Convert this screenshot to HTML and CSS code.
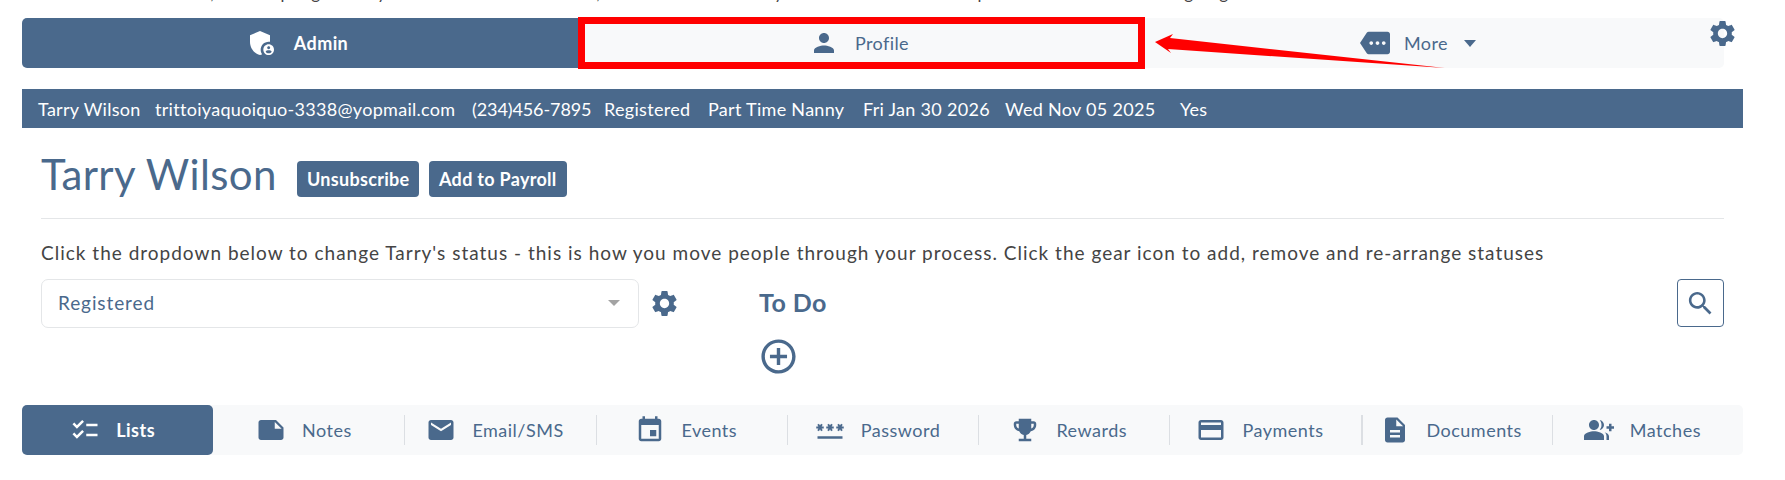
FILE: index.html
```html
<!DOCTYPE html>
<html lang="en">
<head>
    <meta charset="UTF-8">
    <meta name="viewport" content="width=device-width, initial-scale=1.0">
    <title>Tarry Wilson</title>
    <link rel="stylesheet" href="styles.css">
</head>
<body>
    <div class="cutLine">
        <div class="cutLineInner">
            <span>Use the tabs below to add,</span>
            <span>the setup</span>
            <span>log</span>
            <span>key</span>
            <span>and notes for the member,</span>
            <span>then key</span>
            <span>the details on this top</span>
            <span>and then the main log</span>
            <span>tag</span>
            <span class="cutLineEnd">on the section and its data table</span>
        </div>
    </div>

    <nav class="topNav">
        <a class="topTab topTabActive topTabAdmin">
            <svg class="icon iconAdmin" viewBox="0 0 24 24"><path d="M17 11c.34 0 .67.04 1 .09V6.27L10.5 3 3 6.27v4.91c0 4.54 3.2 8.79 7.5 9.82.55-.13 1.08-.32 1.6-.55-.69-.98-1.1-2.17-1.1-3.45 0-3.31 2.69-6 6-6z"/><path d="M17 13c-2.21 0-4 1.79-4 4s1.79 4 4 4 4-1.79 4-4-1.79-4-4-4zm0 1.38c.62 0 1.12.51 1.12 1.12s-.51 1.12-1.12 1.12-1.12-.51-1.12-1.12.5-1.12 1.12-1.12zm0 5.37c-.93 0-1.74-.46-2.24-1.17.05-.72 1.51-1.08 2.24-1.08s2.19.36 2.24 1.08c-.5.71-1.31 1.17-2.24 1.17z"/></svg>
            <span>Admin</span>
        </a>
        <a class="topTab topTabProfile">
            <svg class="icon iconTop" viewBox="0 0 24 24"><path d="M12 12c2.21 0 4-1.79 4-4s-1.79-4-4-4-4 1.79-4 4 1.79 4 4 4zm0 2c-2.67 0-8 1.34-8 4v2h16v-2c0-2.66-5.33-4-8-4z"/></svg>
            <span>Profile</span>
        </a>
        <a class="topTab topTabMore">
            <svg class="icon iconTop" viewBox="0 0 24 24"><path d="M22 3H7c-.69 0-1.23.35-1.59.88L0 12l5.41 8.11c.36.53.9.89 1.59.89h15c1.1 0 2-.9 2-2V5c0-1.1-.9-2-2-2zM9 13.5c-.83 0-1.5-.67-1.5-1.5s.67-1.5 1.5-1.5 1.5.67 1.5 1.5-.67 1.5-1.5 1.5zm5 0c-.83 0-1.5-.67-1.5-1.5s.67-1.5 1.5-1.5 1.5.67 1.5 1.5-.67 1.5-1.5 1.5zm5 0c-.83 0-1.5-.67-1.5-1.5s.67-1.5 1.5-1.5 1.5.67 1.5 1.5-.67 1.5-1.5 1.5z"/></svg>
            <span>More</span>
            <span class="caret"></span>
        </a>
        <svg class="icon navGear" viewBox="0 0 24 24"><path d="M19.14 12.94c.04-.3.06-.61.06-.94 0-.32-.02-.64-.07-.94l2.03-1.58c.18-.14.23-.41.12-.61l-1.92-3.32c-.12-.22-.37-.29-.59-.22l-2.39.96c-.5-.38-1.03-.7-1.62-.94l-.36-2.54c-.04-.24-.24-.41-.48-.41h-3.84c-.24 0-.43.17-.47.41l-.36 2.54c-.59.24-1.13.57-1.62.94l-2.39-.96c-.22-.08-.47 0-.59.22L2.74 8.87c-.12.21-.08.47.12.61l2.03 1.58c-.05.3-.09.63-.09.94s.02.64.07.94l-2.03 1.58c-.18.14-.23.41-.12.61l1.92 3.32c.12.22.37.29.59.22l2.39-.96c.5.38 1.03.7 1.62.94l.36 2.54c.05.24.24.41.48.41h3.84c.24 0 .44-.17.47-.41l.36-2.54c.59-.24 1.13-.56 1.62-.94l2.39.96c.22.08.47 0 .59-.22l1.92-3.32c.12-.22.07-.47-.12-.61l-2.01-1.58zM12 15.6c-1.98 0-3.6-1.62-3.6-3.6s1.62-3.6 3.6-3.6 3.6 1.62 3.6 3.6-1.62 3.6-3.6 3.6z"/></svg>
    </nav>

    <!-- red annotation drawn over the page -->
    <div class="markBox"></div>
    <svg class="markArrow" viewBox="0 0 300 52"><polygon points="0,25 18,17 15,21 290,51 13,32 16,36" /></svg>

    <div class="infoBar">
        <span>Tarry Wilson</span>
        <span>trittoiyaquoiquo-3338@yopmail.com</span>
        <span class="infoPhone">(234)456-7895</span>
        <span>Registered</span>
        <span>Part Time Nanny</span>
        <span>Fri Jan 30 2026</span>
        <span>Wed Nov 05 2025</span>
        <span>Yes</span>
    </div>

    <main class="content">
        <div class="titleRow">
            <h1 class="title">Tarry Wilson</h1>
            <button class="btn btnFirst">Unsubscribe</button>
            <button class="btn">Add to Payroll</button>
        </div>
        <hr class="line">
        <p class="helpText">Click the dropdown below to change Tarry's status - this is how you move people through your process. Click the gear icon to add, remove and re-arrange statuses</p>
        <div class="statusRow">
            <div class="select">
                <span>Registered</span>
                <span class="selectCaret"></span>
            </div>
            <svg class="icon statusGear" viewBox="0 0 24 24"><path d="M19.14 12.94c.04-.3.06-.61.06-.94 0-.32-.02-.64-.07-.94l2.03-1.58c.18-.14.23-.41.12-.61l-1.92-3.32c-.12-.22-.37-.29-.59-.22l-2.39.96c-.5-.38-1.03-.7-1.62-.94l-.36-2.54c-.04-.24-.24-.41-.48-.41h-3.84c-.24 0-.43.17-.47.41l-.36 2.54c-.59.24-1.13.57-1.62.94l-2.39-.96c-.22-.08-.47 0-.59.22L2.74 8.87c-.12.21-.08.47.12.61l2.03 1.58c-.05.3-.09.63-.09.94s.02.64.07.94l-2.03 1.58c-.18.14-.23.41-.12.61l1.92 3.32c.12.22.37.29.59.22l2.39-.96c.5.38 1.03.7 1.62.94l.36 2.54c.05.24.24.41.48.41h3.84c.24 0 .44-.17.47-.41l.36-2.54c.59-.24 1.13-.56 1.62-.94l2.39.96c.22.08.47 0 .59-.22l1.92-3.32c.12-.22.07-.47-.12-.61l-2.01-1.58zM12 15.6c-1.98 0-3.6-1.62-3.6-3.6s1.62-3.6 3.6-3.6 3.6 1.62 3.6 3.6-1.62 3.6-3.6 3.6z"/></svg>
            <div class="todo">
                <h2 class="todoTitle">To Do</h2>
                <svg class="icon todoAdd" viewBox="0 0 24 24"><path d="M13 7h-2v4H7v2h4v4h2v-4h4v-2h-4V7zm-1-5C6.48 2 2 6.48 2 12s4.48 10 10 10 10-4.48 10-10S17.52 2 12 2zm0 18c-4.41 0-8-3.59-8-8s3.59-8 8-8 8 3.59 8 8-3.59 8-8 8z"/></svg>
            </div>
            <button class="searchBtn">
                <svg class="icon iconSearch" viewBox="0 0 24 24"><path d="M15.5 14h-.79l-.28-.27C15.41 12.59 16 11.11 16 9.5 16 5.91 13.09 3 9.5 3S3 5.91 3 9.5 5.91 16 9.5 16c1.61 0 3.09-.59 4.23-1.57l.27.28v.79l5 4.99L20.49 19l-4.99-5zm-6 0C7.01 14 5 11.99 5 9.5S7.01 5 9.5 5 14 7.01 14 9.5 11.99 14 9.5 14z"/></svg>
            </button>
        </div>
    </main>

    <div class="tabs">
        <a class="tab tabActive">
            <svg class="icon" viewBox="0 0 24 24"><path d="M22 7h-9v2h9V7zm0 8h-9v2h9v-2zM5.54 11 2 7.46l1.41-1.41 2.12 2.12 4.24-4.24 1.41 1.41L5.54 11zm0 8L2 15.46l1.41-1.41 2.12 2.12 4.24-4.24 1.41 1.41L5.54 19z"/></svg>
            <span>Lists</span>
        </a>
        <a class="tab">
            <svg class="icon" viewBox="0 0 24 24"><path d="M22 10l-6-6H4c-1.1 0-2 .9-2 2v12.01c0 1.1.9 1.99 2 1.99l16-.01c1.1 0 2-.89 2-1.99v-8zm-7-4.5l5.5 5.5H15V5.5z"/></svg>
            <span>Notes</span>
        </a>
        <a class="tab">
            <svg class="icon" viewBox="0 0 24 24"><path d="M20 4H4c-1.1 0-1.99.9-1.99 2L2 18c0 1.1.9 2 2 2h16c1.1 0 2-.9 2-2V6c0-1.1-.9-2-2-2zm0 4l-8 5-8-5V6l8 5 8-5v2z"/></svg>
            <span>Email/SMS</span>
        </a>
        <a class="tab">
            <svg class="icon" viewBox="0 0 24 24"><path d="M17 12h-5v5h5v-5zM16 1v2H8V1H6v2H5c-1.11 0-1.99.9-1.99 2L3 19c0 1.1.89 2 2 2h14c1.1 0 2-.9 2-2V5c0-1.1-.9-2-2-2h-1V1h-2zm3 18H5V8h14v11z"/></svg>
            <span>Events</span>
        </a>
        <a class="tab">
            <svg class="icon" viewBox="0 0 24 24"><path d="M2 17h20v2H2v-2zm1.15-4.05L4 11.47l.85 1.48 1.3-.75-.85-1.48H7v-1.5H5.3l.85-1.47L4.85 7 4 8.47 3.15 7l-1.3.75.85 1.47H1v1.5h1.7l-.85 1.48 1.3.75zm6.7-.75 1.3.75.85-1.48.85 1.48 1.3-.75-.85-1.48H15v-1.5h-1.7l.85-1.47-1.3-.75L12 8.47 11.15 7l-1.3.75.85 1.47H9v1.5h1.7l-.85 1.48zM23 9.22h-1.7l.85-1.47-1.3-.75L20 8.47 19.15 7l-1.3.75.85 1.47H17v1.5h1.7l-.85 1.48 1.3.75.85-1.48.85 1.48 1.3-.75-.85-1.48H23v-1.5z"/></svg>
            <span>Password</span>
        </a>
        <a class="tab">
            <svg class="icon" viewBox="0 0 24 24"><path d="M19 5h-2V3H7v2H5c-1.1 0-2 .9-2 2v1c0 2.55 1.92 4.63 4.39 4.94.63 1.5 1.98 2.63 3.61 2.96V19H7v2h10v-2h-4v-3.1c1.63-.33 2.98-1.46 3.61-2.96C19.08 12.63 21 10.55 21 8V7c0-1.1-.9-2-2-2zM5 8V7h2v3.82C5.84 10.4 5 9.3 5 8zm14 0c0 1.3-.84 2.4-2 2.82V7h2v1z"/></svg>
            <span>Rewards</span>
        </a>
        <a class="tab">
            <svg class="icon" viewBox="0 0 24 24"><path d="M20 4H4c-1.11 0-1.99.89-1.99 2L2 18c0 1.11.89 2 2 2h16c1.11 0 2-.89 2-2V6c0-1.11-.89-2-2-2zm0 14H4v-6h16v6zm0-10H4V6h16v2z"/></svg>
            <span>Payments</span>
        </a>
        <a class="tab">
            <svg class="icon" viewBox="0 0 24 24"><path d="M14 2H6c-1.1 0-1.99.9-1.99 2L4 20c0 1.1.89 2 1.99 2H18c1.1 0 2-.9 2-2V8l-6-6zm2 16H8v-2h8v2zm0-4H8v-2h8v2zm-3-5V3.5L18.5 9H13z"/></svg>
            <span>Documents</span>
        </a>
        <a class="tab">
            <svg class="icon" viewBox="0 0 24 24"><path d="M22 9V7h-2v2h-2v2h2v2h2v-2h2V9h-2zM8 12c2.21 0 4-1.79 4-4s-1.79-4-4-4-4 1.79-4 4 1.79 4 4 4zm0 1c-2.67 0-8 1.34-8 4v3h16v-3c0-2.66-5.33-4-8-4zm4.51-8.95C13.43 5.11 14 6.49 14 8s-.57 2.89-1.49 3.95C14.47 11.7 16 10.04 16 8s-1.53-3.7-3.49-3.95zM16.53 13.83C17.42 14.66 18 15.7 18 17v3h2v-3c0-1.45-1.59-2.51-3.47-3.17z"/></svg>
            <span>Matches</span>
        </a>
    </div>
</body>
</html>
```

FILE: styles.css
```css
* {
  box-sizing: border-box;
}

html, body {
  margin: 0;
  padding: 0;
  background-color: #fff;
  height: 480px;
  overflow: hidden;
}

body {
  font-family: "Lato", "Open Sans", sans-serif;
  font-size: 18px;
  color: #333;
  position: relative;
}

.icon {
  fill: #4a698c;
  display: block;
  flex: none;
  width: 30px;
  height: 30px;
}

/* line of text cut off by the top of the screenshot */
.cutLine {
  height: 5px;
  overflow: hidden;
}

.cutLineInner {
  display: grid;
  grid-template-columns: 214px 76px 30px 66px 214px 183px 204px 206px 35px 1fr;
  margin-top: -18px;
  font-size: 17px;
  line-height: 22px;
  color: #444;
  white-space: nowrap;
}

.cutLineInner span {
  display: flex;
  justify-content: flex-end;
  overflow: hidden;
}

.cutLineInner .cutLineEnd {
  justify-content: flex-start;
}

.topNav {
  display: grid;
  grid-template-columns: 556px 566px 1fr;
  margin: 13px 61px 0 22px;
  height: 50px;
  background-color: #f8f9fa;
  border-radius: 5px;
  position: relative;
}

.topTab {
  display: flex;
  align-items: center;
  justify-content: center;
  gap: 16px;
  color: #4a698c;
  letter-spacing: 0.4px;
}

.topTabActive {
  background-color: #4a698c;
  color: #fff;
  font-weight: 700;
  border-radius: 5px 0 0 5px;
  padding-right: 6px;
}

.topTabActive .icon {
  fill: #fff;
}

.topTabProfile {
  padding-right: 4px;
}

.topTabMore {
  gap: 14px;
  padding-right: 32px;
}

.iconAdmin {
  width: 32px;
  height: 32px;
}

.iconTop {
  width: 30px;
  height: 30px;
}

.caret {
  width: 0;
  height: 0;
  border-left: 6.5px solid transparent;
  border-right: 6.5px solid transparent;
  border-top: 7px solid #4a698c;
  margin-left: 2px;
}

.navGear {
  position: absolute;
  right: -14px;
  top: 0;
  width: 31px;
  height: 31px;
}

.markBox {
  position: absolute;
  left: 578px;
  top: 17px;
  width: 567px;
  height: 52px;
  border: 7px solid #f00;
}

.markArrow {
  position: absolute;
  left: 1155px;
  top: 17px;
  width: 300px;
  height: 52px;
  overflow: visible;
  fill: #f00;
}

.infoBar {
  display: grid;
  grid-template-columns: 117px 317px 132px 104px 155px 142px 175px 1fr;
  align-items: center;
  margin: 21px 42px 0 22px;
  padding-left: 16px;
  height: 39px;
  background-color: #4a698c;
  color: #fff;
  font-size: 18px;
  letter-spacing: 0.3px;
  white-space: nowrap;
}

.infoBar .infoPhone {
  letter-spacing: -0.1px;
}

.content {
  padding: 0 61px 0 41px;
}

.titleRow {
  display: flex;
  align-items: flex-start;
  margin-top: 33px;
  height: 36px;
}

.title {
  margin: 0 21px 0 0;
  width: 235px;
  font-size: 42px;
  font-weight: 400;
  line-height: 26px;
  color: #4a698c;
  letter-spacing: 0.4px;
  white-space: nowrap;
}

.btn {
  height: 36px;
  border: none;
  border-radius: 4px;
  padding: 0 10px;
  background-color: #4a698c;
  color: #fff;
  font-family: inherit;
  font-size: 18px;
  font-weight: 700;
  letter-spacing: 0.3px;
  white-space: nowrap;
}

.btnFirst {
  width: 122px;
  margin-right: 10px;
}

.line {
  margin: 21px 0 0;
  border: none;
  border-top: 1px solid #e4e6e8;
}

.helpText {
  margin: 22px 0 0;
  height: 38px;
  font-size: 19px;
  line-height: 24px;
  color: #444;
  letter-spacing: 1px;
  white-space: nowrap;
}

.statusRow {
  display: flex;
  align-items: flex-start;
  height: 95px;
}

.select {
  display: flex;
  align-items: center;
  justify-content: space-between;
  width: 598px;
  height: 49px;
  padding: 0 18px 2px 16px;
  border: 1px solid #e4e6e8;
  border-radius: 7px;
  font-size: 19px;
  color: #4a698c;
  letter-spacing: 0.9px;
}

.selectCaret {
  width: 0;
  height: 0;
  border-left: 6px solid transparent;
  border-right: 6px solid transparent;
  border-top: 6px solid #a3a3a3;
}

.statusGear {
  width: 31px;
  height: 31px;
  margin: 9px 0 0 10px;
}

.todo {
  display: flex;
  flex-direction: column;
  margin-left: 79px;
}

.todoTitle {
  margin: 9px 0 0;
  font-size: 25px;
  line-height: 28px;
  font-weight: 700;
  color: #4a698c;
  letter-spacing: 0.4px;
}

.todoAdd {
  width: 41px;
  height: 41px;
  margin-top: 20px;
  margin-left: -1px;
}

.searchBtn {
  display: flex;
  align-items: center;
  justify-content: center;
  width: 47px;
  height: 48px;
  margin-left: auto;
  background-color: #fff;
  border: 1px solid #4a698c;
  border-radius: 4px;
  padding: 0;
}

.iconSearch {
  width: 31px;
  height: 31px;
}

.tabs {
  display: grid;
  grid-template-columns: repeat(9, 1fr);
  margin: 31px 42px 0 22px;
  height: 50px;
  background-color: #f8f9fa;
  border-radius: 5px;
}

.tab {
  display: flex;
  align-items: center;
  justify-content: center;
  gap: 16px;
  padding-right: 10px;
  color: #4a698c;
  letter-spacing: 0.5px;
  position: relative;
}

.tab + .tab:not(:nth-child(2))::before {
  content: "";
  position: absolute;
  left: 0;
  top: 10px;
  bottom: 10px;
  border-left: 1px solid #dcdfe3;
}

.tab:nth-child(8)::before {
  border-left-width: 2px !important;
}

.tabActive {
  background-color: #4a698c;
  color: #fff;
  font-weight: 700;
  border-radius: 5px;
}

.tabActive .icon {
  fill: #fff;
}
```
